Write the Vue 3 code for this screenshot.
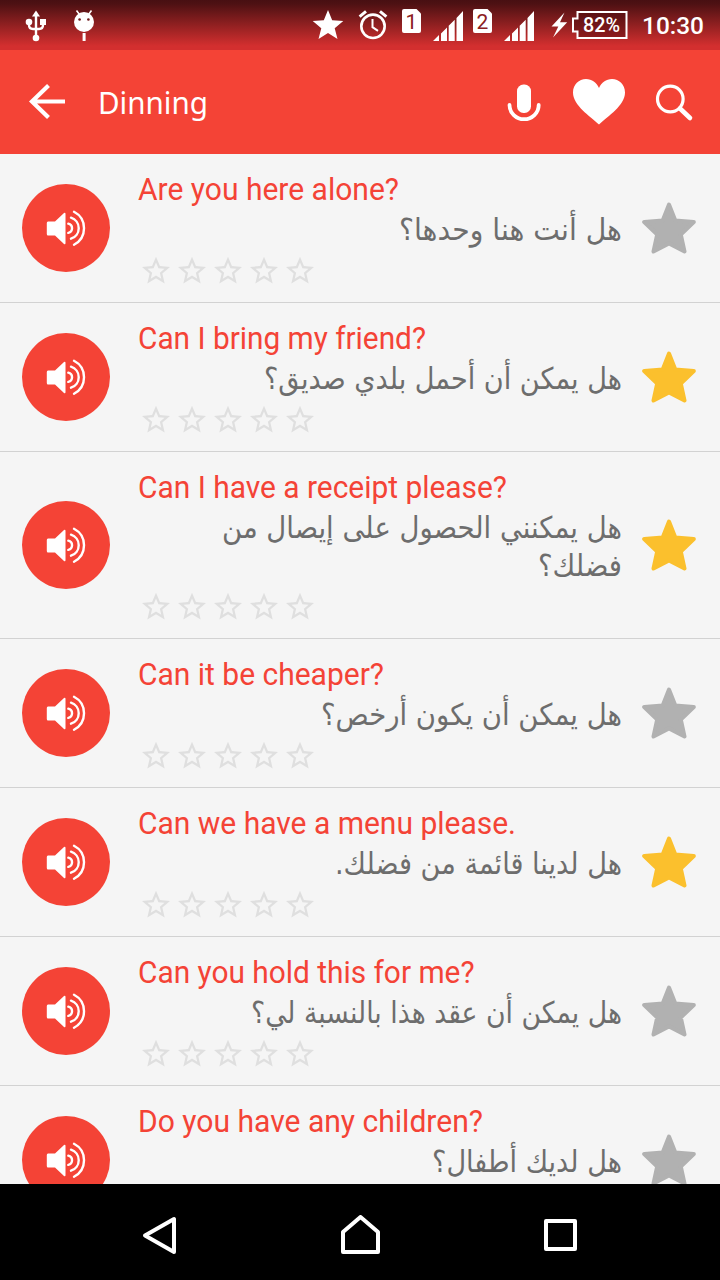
<script setup>
const phrases = [
  { en: 'Are you here alone?', w: 261, fav: false, ar: [['هل أنت هنا وحدها؟', 223]] },
  { en: 'Can I bring my friend?', w: 288, fav: true, ar: [['هل يمكن أن أحمل بلدي صديق؟', 358]] },
  {
    en: 'Can I have a receipt please?', w: 369, fav: true,
    ar: [['هل يمكنني الحصول على إيصال من', 400], ['فضلك؟', 84]],
  },
  { en: 'Can it be cheaper?', w: 246, fav: false, ar: [['هل يمكن أن يكون أرخص؟', 301]] },
  { en: 'Can we have a menu please.', w: 378, fav: true, ar: [['هل لدينا قائمة من فضلك.', 287]] },
  { en: 'Can you hold this for me?', w: 336.5, fav: false, ar: [['هل يمكن أن عقد هذا بالنسبة لي؟', 371]] },
  { en: 'Do you have any children?', w: 345, fav: false, ar: [['هل لديك أطفال؟', 190]] },
]
</script>

<template>
  <div class="screen">
    <header class="status">
      <svg width="720" height="50" viewBox="0 0 720 50">
        <g fill="#fff">
          <path d="M36 10.5l4 6h-8z" />
          <path d="M36 15v22M29 22v3q0 4 4 4h6q4 0 4-4v-3" fill="none" stroke="#fff" stroke-width="2.4" />
          <circle cx="29" cy="22" r="3.3" />
          <path d="M40 19h6v6h-6z" />
          <circle cx="36" cy="38" r="3.3" />
          <circle cx="84" cy="22" r="10" />
          <path d="M79.500 14.500l-3-4M88.500 14.500l3-4" stroke="#fff" stroke-width="1.600" />
          <path d="M82.600 33h3v8h-3z" />
          <circle cx="79.600" cy="19.500" r="1.300" fill="#701a1c" />
          <circle cx="88.400" cy="19.500" r="1.300" fill="#701a1c" />
          <path d="M328 10l4.200 10.300 11.100.8-8.600 7.100 2.800 10.800-9.500-6-9.500 6 2.800-10.800-8.600-7.100 11.100-.8z" />
          <g fill="none" stroke="#fff">
            <circle cx="373" cy="26.300" r="11.700" stroke-width="2.600" />
            <path d="M372.500 19v8.200l5.500 3.600" stroke-width="2" />
            <path d="M359.600 16.600l6.400-5.200M386.400 16.600l-6.400-5.200" stroke-width="3" />
          </g>
          <path d="M404 9h12.500l4.500 4.500V31q0 2-2 2h-15q-2 0-2-2V11q0-2 2-2z" />
          <path d="M475 9h12.500l4.500 4.500V31q0 2-2 2h-15q-2 0-2-2V11q0-2 2-2z" />
          <g id="signal">
            <path d="M433 41l6-6v6zM441 33.500l6-6V41h-6zM448.700 25.700l6-6V41h-6zM456.500 18l6.500-7v30h-6.500z" />
          </g>
          <use href="#signal" x="71" />
          <path d="M564.500 12.500l-13 14h6.800l-5.300 11 14.200-15.200h-7.200z" />
          <path d="M577.500 12h49v26h-49v-6.500h-4.500v-13h4.500z" fill="#3d0508" fill-opacity=".35" stroke="#fff" stroke-width="2" />
        </g>
        <g class="status-text">
          <text x="411.500" y="28.500" text-anchor="middle" class="sim">1</text>
          <text x="482.500" y="28.500" text-anchor="middle" class="sim">2</text>
          <text x="583" y="32" font-size="20" textLength="37" lengthAdjust="spacingAndGlyphs">82%</text>
          <text x="642" y="34" font-size="24" textLength="62" lengthAdjust="spacingAndGlyphs">10:30</text>
        </g>
      </svg>
    </header>

    <nav class="bar">
      <svg class="back" width="40" height="40" viewBox="0 0 40 40">
        <path d="M22.500 3.500L6 19.500l16.500 16M6.500 19.500h32.500" fill="none" stroke="#fff" stroke-width="4.200" />
      </svg>
      <svg class="title" width="408" height="44">
        <text x="0" y="34" textLength="110" lengthAdjust="spacingAndGlyphs">Dinning</text>
      </svg>
      <svg class="mic" width="36" height="40" viewBox="0 0 36 40">
        <rect x="11" y="1.500" width="14" height="28.500" rx="6.500" fill="#fff" />
        <path d="M3.500 22a14.600 14.200 0 0 0 29.200 0" fill="none" stroke="#fff" stroke-width="3.800" stroke-linecap="round" />
      </svg>
      <svg class="heart" width="54" height="48" viewBox="0 0 54 48">
        <path d="M27 46.500C18 38 1 27.500 1 14.500C1 6.500 7 1 14 1c6 0 10.500 3.500 13 9c2.500-5.500 7-9 13-9c7 0 13 5.500 13 13.500C53 27.500 36 38 27 46.500z" fill="#fff" />
      </svg>
      <svg class="search" width="40" height="40" viewBox="0 0 40 40">
        <circle cx="16.300" cy="16" r="12.800" fill="none" stroke="#fff" stroke-width="3.200" />
        <path d="M26 25.500l10 9.500" stroke="#fff" stroke-width="4.600" stroke-linecap="round" />
      </svg>
    </nav>

    <main class="list">
      <section v-for="p in phrases" :key="p.en" class="row">
        <div class="play">
          <svg width="40" height="38" viewBox="0 0 40 38">
            <path d="M2 12.500h7L18 4q1.500-1 1.500 1v29q0 2-1.500 1L9 26.500H2q-1.200 0-1.200-1.500V14q0-1.500 1.200-1.500z" fill="#fff" />
            <g fill="none" stroke="#fff" stroke-width="2.400" stroke-linecap="round">
              <path d="M22.300 14.700a4.700 4.700 0 0 1 0 9.200" />
              <path d="M25 8.700a11 11 0 0 1 0 21" />
              <path d="M28 2.700a18.600 18.600 0 0 1 0 33" />
            </g>
          </svg>
        </div>
        <div class="body">
          <svg class="en" width="484" height="38">
            <text x="0" y="28" :textLength="p.w" lengthAdjust="spacingAndGlyphs">{{ p.en }}</text>
          </svg>
          <svg v-for="line in p.ar" :key="line[0]" class="ar" width="484" height="38">
            <text x="484" y="29.500" direction="rtl" :textLength="line[1]" lengthAdjust="spacingAndGlyphs">{{ line[0] }}</text>
          </svg>
          <div class="rating">
            <svg v-for="n in 5" :key="n" width="36" height="34" viewBox="-0.857 0 25.714 24.286">
              <path d="M22 9.240l-7.190-.62L12 2 9.190 8.630 2 9.240l5.460 4.730L5.820 21 12 17.270 18.180 21l-1.630-7.030L22 9.240zM12 15.400l-3.760 2.270 1-4.280-3.320-2.880 4.380-.38L12 6.100l1.710 4.040 4.380.38-3.320 2.880 1 4.280L12 15.400z" />
            </svg>
          </div>
        </div>
        <svg class="fav" :class="{ on: p.fav }" width="54" height="54" viewBox="0 0 54 54">
          <path d="M27 3.500L33.300 19.500L51.800 21L38.800 33.500L42.500 50.500L27 42.500L11.500 50.500L15.200 33.500L2.200 21L20.700 19.500z" />
        </svg>
      </section>
    </main>

    <footer class="nav">
      <svg width="40" height="40" viewBox="0 0 40 40"><path d="M5 20.500L34 4v33z" /></svg>
      <svg width="40" height="40" viewBox="0 0 40 40"><path d="M3 37V17L20.500 2l17.500 15v20z" /></svg>
      <svg width="40" height="40" viewBox="0 0 40 40"><path d="M6 6h29v28H6z" /></svg>
    </footer>
  </div>
</template>

<style>
body { margin: 0; overflow: hidden; }
</style>

<style scoped>
.screen {
  width: 720px;
  height: 1280px;
  display: flex;
  flex-direction: column;
  overflow: hidden;
  background: #f5f5f5;
  font-family: Roboto, "Noto Sans", sans-serif;
}
svg { display: block; flex: none; }
.status {
  height: 50px;
  flex: none;
  background: linear-gradient(#480f12 0, #4e1113 8%, #d32f2f 92%);
}
.status-text { fill: #fff; font-weight: 500; }
.sim { fill: #8b2022; font-size: 21px; font-weight: 400; }
.bar {
  height: 104px;
  flex: none;
  display: flex;
  align-items: center;
  background: #f44336;
  box-sizing: border-box;
  padding-left: 26px;
}
.title { margin-left: 32px; }
.title text { fill: #fff; font-family: "Noto Sans", sans-serif; font-size: 31px; }
.mic { margin-top: 2px; }
.heart { margin: 0 0 0 30px; }
.search { margin: 2px 0 0 28px; }
.list { flex: 1; min-height: 0; overflow: hidden; }
.row {
  display: flex;
  align-items: center;
  border-bottom: 1px solid #d2d2d2;
  padding: 0 24px 0 22px;
}
.play {
  width: 88px;
  height: 88px;
  border-radius: 50%;
  background: #f44336;
  display: flex;
  align-items: center;
  justify-content: center;
  flex: none;
}
.play svg { margin-left: -1px; }
.body { width: 484px; margin-left: 28px; padding: 18px 0 14px; }
.en text { fill: #f44336; font-size: 30.5px; }
.ar { overflow: visible; }
.ar text { fill: #6d6d6d; font-family: "DejaVu Sans", sans-serif; font-size: 30px; }
.rating { display: flex; height: 40px; align-items: flex-end; }
.rating path { fill: #dfdfdf; }
.fav { margin-left: 20px; fill: #b1b1b1; stroke: #b1b1b1; stroke-width: 4; stroke-linejoin: round; }
.fav.on { fill: #fbc02d; stroke: #fbc02d; }
.nav {
  height: 96px;
  flex: none;
  box-sizing: border-box;
  padding: 0 140px;
  display: flex;
  align-items: center;
  justify-content: space-between;
  background: #000;
}
.nav path { fill: none; stroke: #fff; stroke-width: 4; stroke-linejoin: round; }
.nav svg { margin-top: 6px; }
</style>
